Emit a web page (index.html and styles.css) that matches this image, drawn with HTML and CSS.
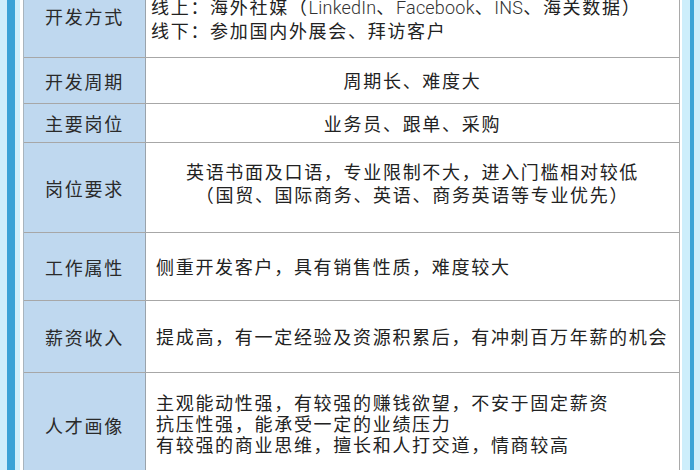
FILE: index.html
```html
<!DOCTYPE html>
<html lang="zh">
<head>
<meta charset="utf-8">
<link rel="stylesheet" href="styles.css">
</head>
<body>
<div class="frame">
  <div class="deco deco-left"></div>
  <div class="table">
    <div class="row r1">
      <div class="label">开发方式</div>
      <div class="cell left pad1"><p class="txt">线上：海外社媒（<span class="latin">LinkedIn</span>、<span class="latin">Facebook</span>、<span class="latin">INS</span>、海关数据）<br>线下：参加国内外展会、拜访客户</p></div>
    </div>
    <div class="row r2">
      <div class="label">开发周期</div>
      <div class="cell center"><p class="txt">周期长、难度大</p></div>
    </div>
    <div class="row r3">
      <div class="label">主要岗位</div>
      <div class="cell center"><p class="txt">业务员、跟单、采购</p></div>
    </div>
    <div class="row r4">
      <div class="label">岗位要求</div>
      <div class="cell center lift"><p class="txt">英语书面及口语，专业限制不大，进入门槛相对较低<br>（国贸、国际商务、英语、商务英语等专业优先）</p></div>
    </div>
    <div class="row r5">
      <div class="label">工作属性</div>
      <div class="cell left"><p class="txt">侧重开发客户，具有销售性质，难度较大</p></div>
    </div>
    <div class="row r6">
      <div class="label">薪资收入</div>
      <div class="cell left"><p class="txt">提成高，有一定经验及资源积累后，有冲刺百万年薪的机会</p></div>
    </div>
    <div class="row r7">
      <div class="label">人才画像</div>
      <div class="cell left tight"><p class="txt">主观能动性强，有较强的赚钱欲望，不安于固定薪资<br>抗压性强，能承受一定的业绩压力<br>有较强的商业思维，擅长和人打交道，情商较高</p></div>
    </div>
  </div>
  <div class="deco deco-right"></div>
</div>
</body>
</html>
```
FILE: styles.css
```css
html, body {
  margin: 0;
  padding: 0;
  width: 700px;
  height: 470px;
  overflow: hidden;
  background: #ffffff;
}
.frame {
  display: flex;
  width: 700px;
  height: 470px;
  overflow: hidden;
  font-family: "Noto Sans CJK SC", "Noto Sans", sans-serif;
  color: #222;
}
.deco {
  flex: none;
  height: 100%;
}
.deco-left {
  width: 23px;
  background: linear-gradient(to right,
    #cdeefb 0, #cdeefb 7px,
    #3aa3d6 7px, #3aa3d6 15px,
    #cdeefb 15px, #cdeefb 20px,
    #ffffff 20px, #ffffff 23px);
}
.deco-right {
  width: 22px;
  background: linear-gradient(to right,
    #ffffff 0, #ffffff 2px,
    #cdeefb 2px, #cdeefb 10px,
    #3aa3d6 10px, #3aa3d6 14px,
    #cdeefb 14px, #cdeefb 22px);
}
.table {
  flex: none;
  width: 655px;
  margin-top: -25px;
  border-left: 1px solid #a9b4bd;
  border-right: 1px solid #a9a9a9;
  display: flex;
  flex-direction: column;
  align-self: flex-start;
}
.row {
  display: grid;
  grid-template-columns: 122px 1fr;
  box-sizing: border-box;
  border-bottom: 1px solid #a7a7a7;
}
.r1 { height: 83px; }
.r2 { height: 46px; }
.r3 { height: 39px; }
.r4 { height: 90px; }
.r5 { height: 68px; }
.r6 { height: 72px; }
.r7 { height: 104px; }
.label {
  background: #bfd8ef;
  border-right: 1px solid #9aa3ab;
  display: flex;
  align-items: center;
  justify-content: center;
  font-size: 18px;
  letter-spacing: 1.7px;
  color: #2a2a2a;
}
.cell {
  background: #ffffff;
  display: flex;
  flex-direction: column;
  justify-content: center;
  font-size: 18px;
  letter-spacing: 1.7px;
  line-height: 22.5px;
  color: #222;
}
.txt {
  margin: 0;
}
.latin {
  font-family: Roboto, "Noto Sans", sans-serif;
  font-weight: 300;
  letter-spacing: 0.2px;
  color: #333;
}
.cell.left {
  text-align: left;
  padding-left: 10px;
}
.cell.pad1 {
  padding-left: 5px;
  padding-top: 4px;
}
.cell.center {
  text-align: center;
}
.cell.lift {
  padding-bottom: 10px;
}
.cell.tight {
  line-height: 21px;
  padding-bottom: 2px;
}
```
